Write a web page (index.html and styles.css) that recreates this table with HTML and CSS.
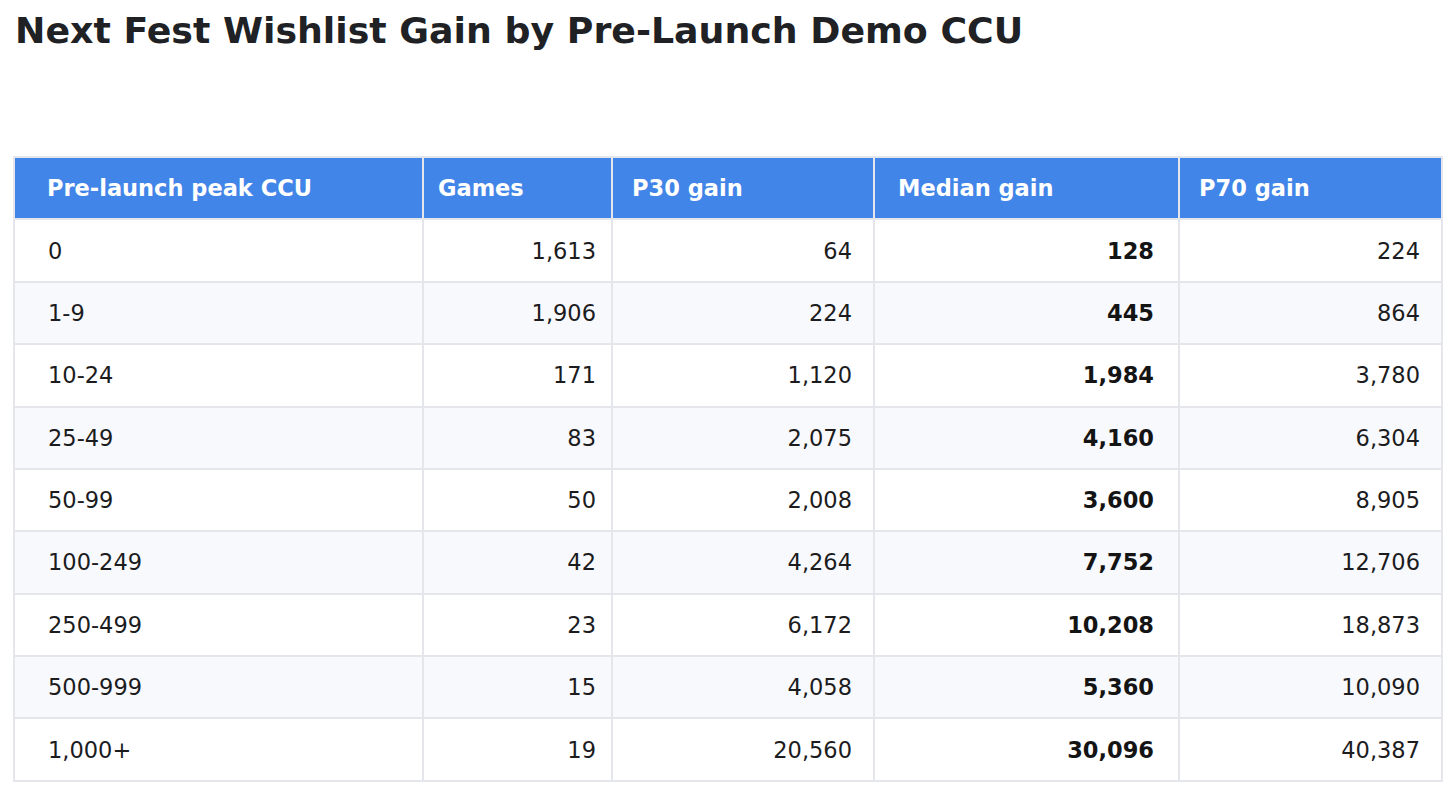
FILE: index.html
```html
<!DOCTYPE html>
<html lang="en">
<head>
<meta charset="utf-8">
<title>Next Fest Wishlist Gain by Pre-Launch Demo CCU</title>
<link rel="stylesheet" href="styles.css">
</head>
<body>
<main class="page">
  <h1 class="title">Next Fest Wishlist Gain by Pre-Launch Demo CCU</h1>
  <table class="data">
    <colgroup>
      <col class="w1"><col class="w2"><col class="w3"><col class="w4"><col class="w5">
    </colgroup>
    <thead>
      <tr>
        <th class="c1">Pre-launch peak CCU</th>
        <th class="c2">Games</th>
        <th class="c3">P30 gain</th>
        <th class="c4">Median gain</th>
        <th class="c5">P70 gain</th>
      </tr>
    </thead>
    <tbody>
      <tr><td class="c1">0</td><td class="c2 num">1,613</td><td class="c3 num">64</td><td class="c4 num strong">128</td><td class="c5 num">224</td></tr>
      <tr><td class="c1">1-9</td><td class="c2 num">1,906</td><td class="c3 num">224</td><td class="c4 num strong">445</td><td class="c5 num">864</td></tr>
      <tr><td class="c1">10-24</td><td class="c2 num">171</td><td class="c3 num">1,120</td><td class="c4 num strong">1,984</td><td class="c5 num">3,780</td></tr>
      <tr><td class="c1">25-49</td><td class="c2 num">83</td><td class="c3 num">2,075</td><td class="c4 num strong">4,160</td><td class="c5 num">6,304</td></tr>
      <tr><td class="c1">50-99</td><td class="c2 num">50</td><td class="c3 num">2,008</td><td class="c4 num strong">3,600</td><td class="c5 num">8,905</td></tr>
      <tr><td class="c1">100-249</td><td class="c2 num">42</td><td class="c3 num">4,264</td><td class="c4 num strong">7,752</td><td class="c5 num">12,706</td></tr>
      <tr><td class="c1">250-499</td><td class="c2 num">23</td><td class="c3 num">6,172</td><td class="c4 num strong">10,208</td><td class="c5 num">18,873</td></tr>
      <tr><td class="c1">500-999</td><td class="c2 num">15</td><td class="c3 num">4,058</td><td class="c4 num strong">5,360</td><td class="c5 num">10,090</td></tr>
      <tr><td class="c1">1,000+</td><td class="c2 num">19</td><td class="c3 num">20,560</td><td class="c4 num strong">30,096</td><td class="c5 num">40,387</td></tr>
    </tbody>
  </table>
</main>
</body>
</html>
```

FILE: styles.css
```css
html, body {
  margin: 0;
  padding: 0;
  background: #ffffff;
}

.page {
  padding: 10px 13px 0 13px;
  font-family: "DejaVu Sans", "Liberation Sans", sans-serif;
  color: #1c1c1e;
}

.title {
  margin: 0 0 104px 2px;
  font-size: 36.3px;
  font-weight: bold;
  line-height: 42px;
  color: #202124;
}

.data {
  width: 1428px;
  border-collapse: collapse;
  table-layout: fixed;
  font-size: 22.5px;
  line-height: 26px;
}

.w1 { width: 409px; }
.w2 { width: 189px; }
.w3 { width: 262px; }
.w4 { width: 305px; }
.w5 { width: 263px; }

.data th,
.data td {
  border: 2px solid #e4e6eb;
  padding-top: 17.2px;
  padding-bottom: 17.2px;
  white-space: nowrap;
}

.data th {
  background: #4285e8;
  color: #ffffff;
  font-weight: bold;
  text-align: left;
}

.data td {
  color: #1c1c1e;
  font-weight: normal;
}

.data tbody tr:nth-child(even) td {
  background: #f8f9fd;
}

th.c1 { padding-left: 32px; padding-right: 14px; }
td.c1 { padding-left: 33px; padding-right: 14px; }
.c2 { padding-left: 14px; padding-right: 15px; }
.c3 { padding-left: 19px; padding-right: 21px; }
.c4 { padding-left: 23px; padding-right: 24px; }
.c5 { padding-left: 19px; padding-right: 21px; }

.num { text-align: right; }

.data td.strong { font-weight: bold; color: #141414; }
```
